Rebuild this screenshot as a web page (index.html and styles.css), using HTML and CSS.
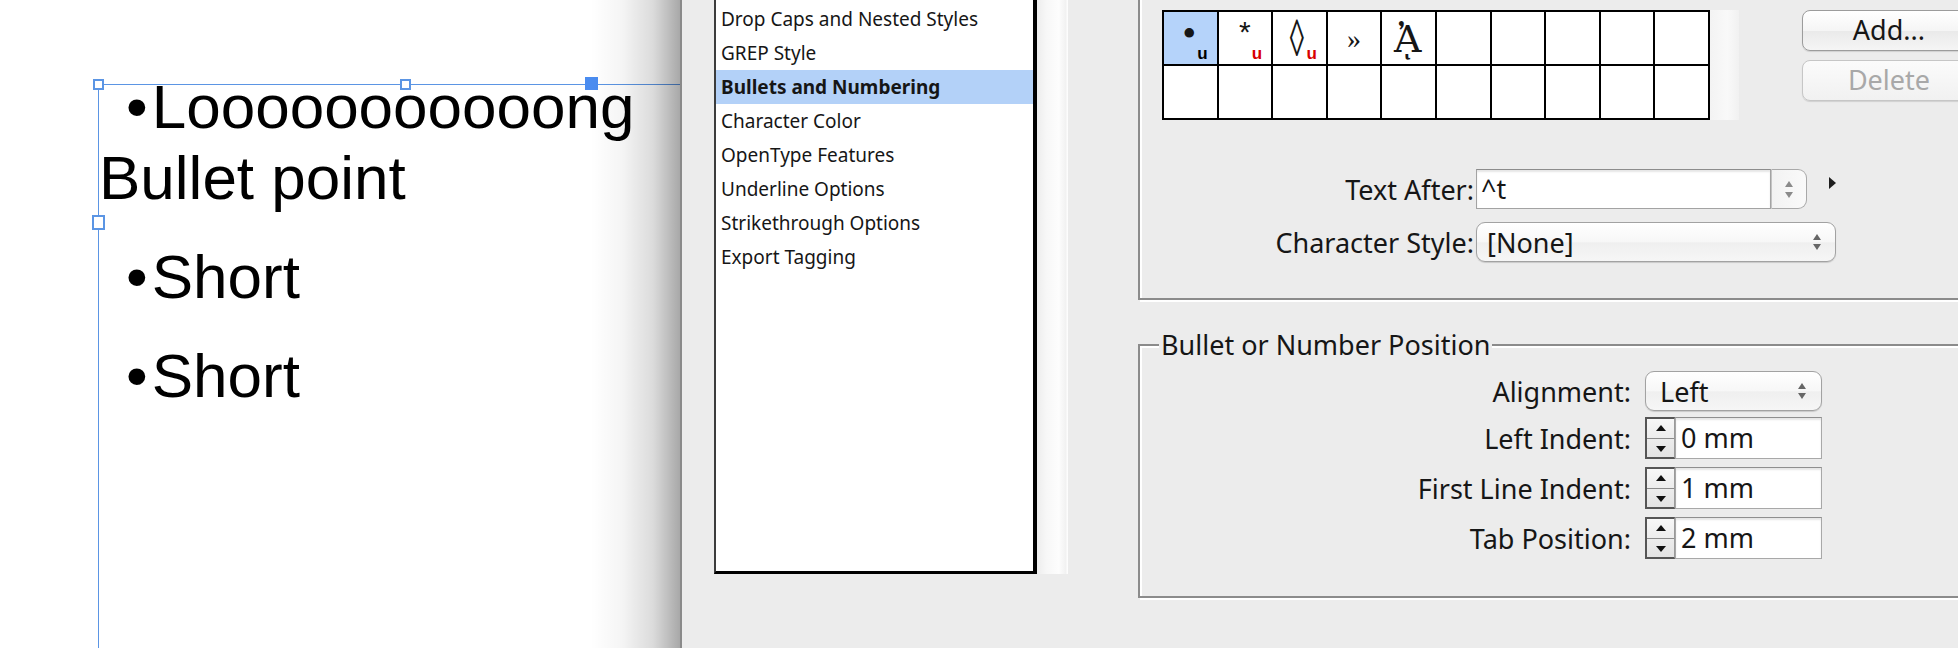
FILE: index.html
```html
<!doctype html>
<html>

<head>
  <meta charset="UTF-8">
  <title>Bullets and Numbering</title>
  <link rel="stylesheet" href="styles.css">
</head>

<body>
  <div class="desk">

    <!-- layout page with the selected text frame -->
    <div class="canvas">
      <div class="frame">
        <p><span class="dot">•</span><span>Looooooooooong</span> <span>Bullet point</span></p>
        <p><span class="dot">•</span>Short</p>
        <p><span class="dot">•</span>Short</p>
      </div>
      <span class="handle h-tl"></span>
      <span class="handle h-tm"></span>
      <span class="handle h-ml"></span>
      <span class="handle port"></span>
      <div class="shade"></div>
    </div>

    <!-- paragraph style options dialog -->
    <div class="dialog">
      <div class="sections">
        <ul class="list">
          <li>Drop Caps and Nested Styles</li>
          <li>GREP Style</li>
          <li class="on">Bullets and Numbering</li>
          <li>Character Color</li>
          <li>OpenType Features</li>
          <li>Underline Options</li>
          <li>Strikethrough Options</li>
          <li>Export Tagging</li>
        </ul>
        <div class="track"></div>
      </div>

      <div class="settings">
        <div class="group char-box">
          <div class="glyph-row">
            <div class="glyph-wrap">
              <div class="glyphs">
                <span class="sel"><b class="g-dot">•</b><i>u</i></span>
                <span><b class="g-star">*</b><i class="red">u</i></span>
                <span><b class="g-loz">◊</b><i class="red">u</i></span>
                <span><b class="g-quot">»</b></span>
                <span><b class="g-alpha">ᾈ</b></span>
                <span></span><span></span><span></span><span></span><span></span>
                <span></span><span></span><span></span><span></span><span></span>
                <span></span><span></span><span></span><span></span><span></span>
              </div>
              <div class="glyph-track"></div>
            </div>
            <div class="buttons">
              <div class="btn">Add...</div>
              <div class="btn off">Delete</div>
            </div>
          </div>

          <div class="field-row after">
            <div class="label">Text After:</div>
            <div class="combo">
              <div class="combo-input">^t</div>
              <div class="combo-step"><span class="up"></span><span class="down"></span></div>
            </div>
            <span class="more"></span>
          </div>
          <div class="field-row style">
            <div class="label">Character Style:</div>
            <div class="select wide">[None]<span class="arrows"><span class="up"></span><span class="down"></span></span></div>
          </div>
        </div>

        <fieldset class="group position">
          <legend>Bullet or Number Position</legend>
          <div class="pos-row">
            <div class="pos-label">Alignment:</div>
            <div class="select narrow">Left<span class="arrows"><span class="up"></span><span class="down"></span></span></div>
          </div>
          <div class="pos-row">
            <div class="pos-label">Left Indent:</div>
            <div class="stepper"><span class="up"></span><span class="down"></span></div>
            <div class="num">0 mm</div>
          </div>
          <div class="pos-row">
            <div class="pos-label">First Line Indent:</div>
            <div class="stepper"><span class="up"></span><span class="down"></span></div>
            <div class="num">1 mm</div>
          </div>
          <div class="pos-row">
            <div class="pos-label">Tab Position:</div>
            <div class="stepper"><span class="up"></span><span class="down"></span></div>
            <div class="num">2 mm</div>
          </div>
        </fieldset>
      </div>
    </div>

  </div>
</body>

</html>
```

FILE: styles.css
```css
* {
  box-sizing: border-box;
}

body {
  margin: 0;
  background: #ececec;
}

.desk {
  display: flex;
  height: 648px;
  overflow: hidden;
}

/* page */

.canvas {
  position: relative;
  flex: 0 0 680px;
  background: #fff;
  overflow: hidden;
}

.frame {
  margin: 84px 0 0 98px;
  width: 614px;
  height: 620px;
  border-top: 1px solid #5b95e4;
  border-left: 1px solid #5b95e4;
  font: 62px/71px "Liberation Sans", Arial, sans-serif;
  color: #000;
}

.frame p {
  margin: 0 0 28px;
  text-indent: 27px;
}

.frame p:first-child {
  margin-top: -14px;
}

.frame .dot {
  margin-right: 4px;
}

.handle {
  position: absolute;
  width: 11px;
  height: 11px;
  border: 2px solid #5b95e4;
  background: #fff;
}

.h-tl {
  left: 93px;
  top: 79px;
}

.h-tm {
  left: 400px;
  top: 79px;
}

.h-ml {
  left: 92px;
  top: 215px;
  width: 13px;
  height: 15px;
}

.port {
  left: 585px;
  top: 77px;
  width: 13px;
  height: 13px;
  background: #4a8cf0;
  border-color: #4a8cf0;
}

.shade {
  position: absolute;
  top: 0;
  right: 0;
  bottom: 0;
  width: 90px;
  background: linear-gradient(to right, rgba(0, 0, 0, 0) 0%, rgba(0, 0, 0, 0.04) 35%, rgba(0, 0, 0, 0.14) 70%, rgba(0, 0, 0, 0.34) 100%);
}

/* dialog */

.dialog {
  flex: 1;
  display: flex;
  border-left: 2px solid #8a8a8a;
  overflow: hidden;
  font-family: "Noto Sans", "Liberation Sans", sans-serif;
  color: #161616;
}

.sections {
  flex: 0 0 354px;
  margin-left: 32px;
  height: 576px;
  display: flex;
}

.list {
  width: 323px;
  height: 574px;
  margin: 0;
  padding: 2px 0 0;
  list-style: none;
  background: #fff;
  border-left: 2px solid #3c3c3c;
  border-right: 4px solid #000;
  border-bottom: 3px solid #000;
  font-size: 19px;
}

.list li {
  height: 34px;
  line-height: 34px;
  padding-left: 5px;
  white-space: nowrap;
}

.list .on {
  background: #b3d1f8;
  font-weight: 700;
}

.track {
  flex: 1;
  height: 574px;
  background: linear-gradient(to right, #ededed, #f7f7f7 30%, #fdfdfd 70%, #f2f2f2 92%, #fff);
}

.settings {
  flex: 1;
  padding-left: 70px;
}

.group {
  border: 2px solid #8b8b8b;
  box-shadow: inset 2px 2px 0 #fff, 2px 2px 0 #fff;
}

.char-box {
  width: 900px;
  height: 320px;
  margin-top: -20px;
  padding: 28px 0 0 22px;
}

.glyph-row {
  display: flex;
  align-items: flex-start;
}

.glyph-wrap {
  display: flex;
}

.glyphs {
  display: grid;
  grid-template-columns: repeat(10, 52.6px);
  grid-auto-rows: 52px;
  gap: 2px;
  padding: 2px;
  background: #000;
}

.glyphs span {
  position: relative;
  display: flex;
  align-items: center;
  justify-content: center;
  background: #fff;
}

.glyphs .sel {
  background: #b5d3fa;
}

.glyphs b {
  font-weight: normal;
  line-height: 1;
}

.glyphs i {
  position: absolute;
  right: 9px;
  bottom: 2px;
  font: bold 17px/1 "Liberation Sans", sans-serif;
  font-style: normal;
  color: #000;
}

.glyphs i.red {
  color: #d80000;
}

.g-dot {
  font: 40px "Liberation Serif", serif;
  margin: -8px 0 0 -2px;
}

.g-star {
  font: bold 30px "Liberation Sans", sans-serif;
  margin: -12px 0 0 0;
}

.g-loz {
  font: 52px "Liberation Sans", sans-serif;
  margin: 0 0 0 -6px;
  transform: scaleX(0.55);
}

.g-quot {
  font: 28px "Liberation Serif", serif;
  margin: 2px 0 0 0;
}

.g-alpha {
  font: 38px "DejaVu Serif", serif;
  margin: 2px 0 0 -2px;
}

.glyph-track {
  width: 29px;
  background: linear-gradient(to right, #f3f3f3, #f9f9f9 60%, #f1f1f1);
}

.buttons {
  display: flex;
  flex-direction: column;
  gap: 9px;
  margin-left: 63px;
}

.btn {
  width: 174px;
  height: 41px;
  border: 1px solid #9c9c9c;
  border-radius: 8px;
  background: linear-gradient(#ffffff, #f5f5f5 50%, #eaeaea 52%, #f5f5f5);
  box-shadow: 0 1px 1px rgba(0, 0, 0, 0.12);
  font-size: 27px;
  line-height: 38px;
  text-align: center;
}

.btn.off {
  color: #a8a8a8;
  border-color: #c6c6c6;
  background: linear-gradient(#fbfbfb, #f1f1f1);
}

.field-row {
  display: flex;
  align-items: center;
  font-size: 27px;
}

.after {
  margin-top: 49px;
}

.style {
  margin-top: 13px;
}

.label {
  width: 314px;
  padding-right: 2px;
  text-align: right;
  white-space: nowrap;
}

.combo {
  display: flex;
  width: 331px;
  height: 40px;
}

.combo-input {
  flex: 1;
  padding-left: 4px;
  line-height: 38px;
  background: #fff;
  border: 1px solid #a3a3a3;
  border-top-color: #8c8c8c;
  box-shadow: inset 0 2px 2px rgba(0, 0, 0, 0.1);
}

.combo-step {
  width: 36px;
  display: flex;
  flex-direction: column;
  align-items: center;
  justify-content: center;
  gap: 5px;
  border: 1px solid #a9a9a9;
  border-left-color: #c4c4c4;
  border-radius: 0 9px 9px 0;
  background: linear-gradient(to right, #f2f2f2, #fafafa);
}

.up,
.down {
  display: block;
  width: 0;
  height: 0;
  border-left: 4px solid transparent;
  border-right: 4px solid transparent;
}

.up {
  border-bottom: 6px solid #8a8a8a;
}

.down {
  border-top: 6px solid #8a8a8a;
}

.more {
  width: 0;
  height: 0;
  margin: 0 0 12px 22px;
  border-left: 7px solid #1e1e1e;
  border-top: 6px solid transparent;
  border-bottom: 6px solid transparent;
}

.select {
  display: flex;
  align-items: center;
  justify-content: space-between;
  height: 40px;
  border: 1px solid #a2a2a2;
  border-radius: 9px;
  background: linear-gradient(#ffffff, #f7f7f7 50%, #efefef 52%, #f6f6f6);
  box-shadow: 0 1px 1px rgba(0, 0, 0, 0.15);
  white-space: nowrap;
}

.select.wide {
  width: 360px;
  padding: 0 14px 0 10px;
}

.select.narrow {
  width: 177px;
  padding: 0 15px 0 14px;
}

.arrows {
  display: flex;
  flex-direction: column;
  gap: 4px;
}

.arrows .up {
  border-bottom-color: #666;
}

.arrows .down {
  border-top-color: #666;
}

.position {
  width: 900px;
  margin: 29px 0 0;
  padding: 10px 0 37px 19px;
  min-width: 0;
  font-size: 27px;
}

.position legend {
  padding: 0 2px;
  line-height: 32px;
  background: #ececec;
}

.pos-row {
  display: flex;
  align-items: center;
  margin-top: 8px;
}

.pos-row:first-of-type {
  margin-top: 0;
}

.pos-row:nth-of-type(2) {
  margin-top: 6px;
}

.pos-label {
  width: 472px;
  margin-right: 14px;
  text-align: right;
  white-space: nowrap;
}

.stepper {
  width: 30px;
  height: 42px;
  display: flex;
  flex-direction: column;
  border: 2px solid #555;
  border-right: 1px solid #9a9a9a;
  background: linear-gradient(#f7f7f7, #e3e3e3);
}

.stepper .up,
.stepper .down {
  flex: 1;
  width: auto;
  height: auto;
  border: 0;
  position: relative;
}

.stepper .up {
  border-bottom: 1px solid #8c8c8c;
}

.stepper .up::after,
.stepper .down::after {
  content: "";
  position: absolute;
  left: 9px;
  border-left: 5px solid transparent;
  border-right: 5px solid transparent;
}

.stepper .up::after {
  top: 6px;
  border-bottom: 6px solid #111;
}

.stepper .down::after {
  bottom: 5px;
  border-top: 6px solid #111;
}

.num {
  width: 147px;
  height: 42px;
  padding-left: 5px;
  line-height: 40px;
  background: #fff;
  border: 1px solid #a8a8a8;
  border-top-color: #8f8f8f;
  box-shadow: inset 0 2px 2px rgba(0, 0, 0, 0.1);
}
```
